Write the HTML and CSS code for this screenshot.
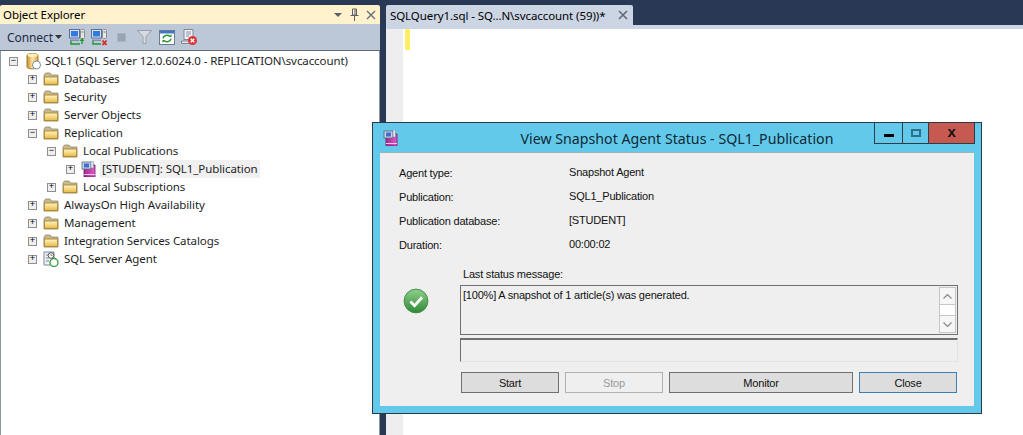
FILE: index.html
```html
<!DOCTYPE html>
<html lang="en">
<head>
<meta charset="utf-8">
<title>SSMS Snapshot Agent Status</title>
<link rel="stylesheet" href="styles.css">
</head>
<body>
<svg class="defs" width="0" height="0" aria-hidden="true">
  <defs>
    <linearGradient id="fg" x1="0" y1="0" x2="0" y2="1"><stop offset="0" stop-color="#fff6c8"/><stop offset="1" stop-color="#e9b83f"/></linearGradient>
    <linearGradient id="bk" x1="0" y1="0" x2="1" y2="0"><stop offset="0" stop-color="#a8288f"/><stop offset="1" stop-color="#e25ac8"/></linearGradient>
    <linearGradient id="gb" x1="0" y1="0" x2="0" y2="1"><stop offset="0" stop-color="#8fd08f"/><stop offset="1" stop-color="#2f8a35"/></linearGradient>
    <linearGradient id="cyl" x1="0" y1="0" x2="1" y2="0"><stop offset="0" stop-color="#c98f2c"/><stop offset=".5" stop-color="#fbe6a6"/><stop offset="1" stop-color="#d9a648"/></linearGradient>
    <symbol id="folder" viewBox="0 0 16 14">
      <path d="M1 3 2.500 1H7l1.500 2H15v10H1z" fill="#c9b98a" stroke="#8f8a70" stroke-width=".8"/>
      <path d="M1.400 5H14.600V12.600H1.400z" fill="url(#fg)" stroke="#a8842f" stroke-width=".9"/>
    </symbol>
    <symbol id="pub" viewBox="0 0 16 16">
      <path d="M3 4h11v12H3z" fill="url(#bk)" stroke="#6b1a60" stroke-width=".8"/>
      <path d="M3 13.500h11" stroke="#f5c6ea" stroke-width="1"/>
      <rect x="1" y="1" width="9" height="7" fill="#c9d3e6" stroke="#56657f" stroke-width=".8"/>
      <rect x="3" y="2.500" width="5" height="4" fill="#3e6fd0"/>
      <rect x="10" y="0" width="2.500" height="7" fill="#dfe4ec" stroke="#7a8598" stroke-width=".5"/>
    </symbol>
    <symbol id="pc" viewBox="0 0 17 17">
      <rect x=".5" y=".5" width="10" height="8.500" fill="#d7e2f2" stroke="#5b6f94"/>
      <rect x="2" y="2" width="7" height="5.500" fill="#2f7be0"/>
      <rect x="11.500" y=".5" width="4" height="9" rx="1" fill="#e6e6e6" stroke="#8c8c8c"/>
      <path d="M12.500 3h2" stroke="#777"/>
      <path d="M1 10.500h9v1.500H1z" fill="#7d8fb0"/>
    </symbol>
  </defs>
</svg>

<aside class="explorer">
  <header class="pane-title">
    <span class="pane-name">Object Explorer</span>
    <span class="pane-controls">
      <svg width="10" height="6" viewBox="0 0 10 6"><path d="M1 1h8L5 5z" fill="#5b5f66"/></svg>
      <svg width="9" height="13" viewBox="0 0 9 13"><path d="M2.500 1h4v6h-4zM.5 7.500h8M4.500 8v5M5 1.500v5" fill="none" stroke="#5b5f66"/></svg>
      <svg width="10" height="10" viewBox="0 0 10 10"><path d="M1 1l8 8M9 1l-8 8" stroke="#6b6f76" stroke-width="1.400"/></svg>
    </span>
  </header>
  <div class="toolbar">
    <span class="connect">Connect</span>
    <svg class="caret" width="7" height="4" viewBox="0 0 7 4"><path d="M0 0h7L3.500 4z" fill="#333"/></svg>
    <svg class="tb tb-first" width="17" height="17" viewBox="0 0 17 17"><use href="#pc" width="17" height="17"/><path d="M2 12v3h9M13 15v-4" fill="none" stroke="#1d9b2c" stroke-width="1.400"/><path d="M10.500 12l2.500-3 2.500 3z" fill="#1d9b2c"/></svg>
    <svg class="tb tb-second" width="17" height="17" viewBox="0 0 17 17"><use href="#pc" width="17" height="17"/><path d="M2 12v3h8" fill="none" stroke="#1d9b2c" stroke-width="1.400"/><path d="M11.500 11.500l4 4.500M15.500 11.500l-4 4.500" stroke="#e0231c" stroke-width="1.800"/></svg>
    <span class="stop-icon"></span>
    <svg class="tb tb-filter" width="15" height="14" viewBox="0 0 15 14"><path d="M.5.500h14L9 6.500v7H6v-7z" fill="#d8dbe0" stroke="#9aa0a8"/></svg>
    <svg class="tb tb-refresh" width="16" height="15" viewBox="0 0 16 15"><rect x=".5" y=".5" width="15" height="14" fill="#fff" stroke="#6a7a92"/><rect x="1" y="1" width="14" height="2.500" fill="#3f78c8"/><path d="M4 8.500a4 3.500 0 0 1 7-2M12 8.500a4 3.500 0 0 1-7 2" fill="none" stroke="#2b9a33" stroke-width="1.500"/><path d="M9.500 7h3V4zM6.500 10h-3v3z" fill="#2b9a33"/></svg>
    <svg class="tb tb-report" width="16" height="16" viewBox="0 0 16 16"><path d="M3 .5h9v10H3z" fill="#f2f3f6" stroke="#7f8794"/><path d="M5 3h5M5 5h5M5 7h3" stroke="#8a92a0"/><path d="M.5 12h9v2.500H.5z" fill="#e3e6ea" stroke="#7f8794"/><circle cx="11.500" cy="11.500" r="4.500" fill="#d9353a"/><path d="M9.700 9.700l3.600 3.600M13.300 9.700l-3.600 3.600" stroke="#fff" stroke-width="1.300"/></svg>
  </div>
  <ul class="tree">
    <li class="node node-root"><span class="exp">&#8722;</span>
      <svg class="icon" width="15" height="18" viewBox="0 0 15 18"><path d="M1 3.500C1 .8 12 .8 12 3.500V15C12 17.500 1 17.500 1 15z" fill="url(#cyl)" stroke="#a67a26"/><ellipse cx="6.500" cy="3.300" rx="5" ry="1.800" fill="#fdeec2"/><circle cx="10.500" cy="13" r="4" fill="#fff" stroke="#7d8a9c"/></svg>
      <span class="label">SQL1 (SQL Server 12.0.6024.0 - REPLICATION\svcaccount)</span></li>
    <li class="node l1"><span class="exp">+</span><svg class="icon" width="16" height="14"><use href="#folder"/></svg><span class="label">Databases</span></li>
    <li class="node l1"><span class="exp">+</span><svg class="icon" width="16" height="14"><use href="#folder"/></svg><span class="label">Security</span></li>
    <li class="node l1"><span class="exp">+</span><svg class="icon" width="16" height="14"><use href="#folder"/></svg><span class="label">Server Objects</span></li>
    <li class="node l1"><span class="exp">&#8722;</span><svg class="icon" width="16" height="14"><use href="#folder"/></svg><span class="label">Replication</span></li>
    <li class="node l2"><span class="exp">&#8722;</span><svg class="icon" width="16" height="14"><use href="#folder"/></svg><span class="label">Local Publications</span></li>
    <li class="node l3"><span class="exp">+</span><svg class="icon" width="16" height="16"><use href="#pub"/></svg><span class="label selected">[STUDENT]: SQL1_Publication</span></li>
    <li class="node l2"><span class="exp">+</span><svg class="icon" width="16" height="14"><use href="#folder"/></svg><span class="label">Local Subscriptions</span></li>
    <li class="node l1"><span class="exp">+</span><svg class="icon" width="16" height="14"><use href="#folder"/></svg><span class="label">AlwaysOn High Availability</span></li>
    <li class="node l1"><span class="exp">+</span><svg class="icon" width="16" height="14"><use href="#folder"/></svg><span class="label">Management</span></li>
    <li class="node l1"><span class="exp">+</span><svg class="icon" width="16" height="14"><use href="#folder"/></svg><span class="label">Integration Services Catalogs</span></li>
    <li class="node l1"><span class="exp">+</span>
      <svg class="icon" width="16" height="16" viewBox="0 0 16 16"><path d="M1 1h10v13H1z" fill="#eef1f6" stroke="#7f8794"/><path d="M3 4h3M3 7h3M3 10h3" stroke="#7f8794"/><circle cx="8" cy="4.500" r="2.800" fill="#fff" stroke="#555"/><path d="M8 3v1.500h1.500" fill="none" stroke="#555" stroke-width=".7"/><circle cx="11" cy="11.500" r="4" fill="#fff" stroke="#3a9a3f" stroke-width="1.300"/></svg>
      <span class="label">SQL Server Agent</span></li>
  </ul>
</aside>

<main class="editor-pane">
  <div class="tabs">
    <div class="tab">
      <span>SQLQuery1.sql - SQ...N\svcaccount (59))*</span>
      <svg width="10" height="10" viewBox="0 0 10 10"><path d="M1 1l8 8M9 1l-8 8" stroke="#5f6670" stroke-width="1.500"/></svg>
    </div>
  </div>
  <div class="tab-strip"></div>
  <div class="editor">
    <div class="gutter"></div>
    <div class="changebar"></div>
  </div>
</main>

<section class="dialog">
  <header class="dialog-title">
    <svg class="dialog-icon" width="16" height="16"><use href="#pub"/></svg>
    <h1>View Snapshot Agent Status - SQL1_Publication</h1>
    <div class="win-controls">
      <span class="win-btn min"><i></i></span>
      <span class="win-btn max"><i></i></span>
      <span class="win-btn close">x</span>
    </div>
  </header>
  <div class="dialog-body">
    <dl class="info">
      <dt>Agent type:</dt><dd>Snapshot Agent</dd>
      <dt>Publication:</dt><dd>SQL1_Publication</dd>
      <dt>Publication database:</dt><dd>[STUDENT]</dd>
      <dt>Duration:</dt><dd>00:00:02</dd>
    </dl>
    <div class="status-caption">Last status message:</div>
    <div class="status-row">
      <svg class="ok" width="26" height="26" viewBox="0 0 28 28"><circle cx="14" cy="14" r="12.800" fill="url(#gb)" stroke="#3b8a3e"/><path d="M8 14.500l4.500 4.500L20.500 10" fill="none" stroke="#fff" stroke-width="3"/></svg>
      <div class="status-box">
        <span class="status-text">[100%] A snapshot of 1 article(s) was generated.</span>
        <div class="scroll">
          <span class="sb-btn"><svg width="9" height="5" viewBox="0 0 9 5"><path d="M.5 4.500l4-4 4 4" fill="none" stroke="#8a8a8a" stroke-width="1.200"/></svg></span>
          <span class="sb-track"></span>
          <span class="sb-btn"><svg width="9" height="5" viewBox="0 0 9 5"><path d="M.5.500l4 4 4-4" fill="none" stroke="#8a8a8a" stroke-width="1.200"/></svg></span>
        </div>
      </div>
    </div>
    <div class="progress"></div>
    <div class="actions">
      <button class="btn">Start</button>
      <button class="btn disabled">Stop</button>
      <button class="btn wide">Monitor</button>
      <button class="btn default">Close</button>
    </div>
  </div>
</section>
</body>
</html>
```

FILE: styles.css
```css
* { box-sizing: border-box; }
html, body { margin: 0; padding: 0; height: 100%; }
body {
  width: 1023px;
  height: 435px;
  overflow: hidden;
  background: #293955;
  display: flex;
  gap: 6px;
  padding-top: 5px;
  position: relative;
  font-family: "Noto Sans", "Open Sans", sans-serif;
  font-size: 11.5px;
  letter-spacing: -0.085px;
  color: #1e1e1e;
}
.defs { position: absolute; }

/* Object Explorer */
.explorer { width: 380px; display: flex; flex-direction: column; flex: none; }
.pane-title {
  height: 19px;
  background: #fff2cc;
  border-radius: 2px 2px 0 0;
  display: flex;
  align-items: center;
  justify-content: space-between;
  padding: 0 4px 0 3px;
  color: #000;
}
.pane-controls { display: flex; align-items: center; gap: 7px; }
.toolbar {
  height: 27px;
  background: #bcc7d8;
  border-bottom: 1px solid #5f6b7d;
  display: flex;
  align-items: center;
  padding-left: 7px;
}
.connect { width: 48px; color: #1e2a44; font-size: 12px; }
.tb { flex: none; }
.tb-first { margin-left: 7px; }
.tb-second { margin-left: 5px; }
.stop-icon { width: 9px; height: 9px; margin: 0 11px 0 9px; background: #9aa3b0; box-shadow: inset 0 0 0 1px #aab2bd; }
.tb-refresh { margin-left: 7px; }
.tb-report { margin-left: 6px; }
.tree {
  list-style: none;
  margin: 0;
  padding: 1px 0 0;
  flex: 1;
  background: #fff;
  border-left: 1px solid #8d96a3;
  border-right: 1px solid #8d96a3;
}
.node { height: 18px; display: flex; align-items: center; padding-left: 8px; white-space: nowrap; }
.l1 { padding-left: 27px; }
.l2 { padding-left: 46px; }
.l3 { padding-left: 65px; }
.exp {
  width: 9px;
  height: 9px;
  flex: none;
  border: 1px solid #8f8f8f;
  background: #eee;
  font: 9px/7px "Liberation Mono", monospace;
  letter-spacing: 0;
  text-align: center;
  color: #000;
}
.icon { flex: none; margin-left: 6px; }
.node-root .icon { margin-left: 8px; }
.label { margin-left: 4px; height: 18px; line-height: 18px; padding: 0 1px; }
.node-root .label { margin-left: 3px; }
.selected { background: #f0f0f0; padding: 0 2px; margin-left: 3px; }

/* Editor */
.editor-pane { flex: 1; display: flex; flex-direction: column; }
.tabs { height: 20px; display: flex; }
.tab {
  width: 247px;
  background: #ccd5e3;
  border-radius: 2px 2px 0 0;
  display: flex;
  align-items: center;
  justify-content: space-between;
  padding: 0 5px 0 4px;
  color: #000;
  white-space: nowrap;
}
.tab-strip { height: 4px; background: #ccd5e3; }
.editor { flex: 1; background: #fff; display: flex; }
.gutter { width: 17px; background: #eeeeee; }
.changebar { width: 5px; height: 21px; margin-left: 2px; background: #ffee62; }

/* Dialog window */
.dialog {
  position: absolute;
  left: 372px;
  top: 122px;
  width: 610px;
  height: 292px;
  background: #63c9ea;
  border: 1px solid #2c3a48;
  display: flex;
  flex-direction: column;
  padding: 0 7px 7px;
  font-family: "Liberation Sans", Arial, sans-serif;
  font-size: 11px;
  letter-spacing: -0.2px;
  color: #111;
}
.dialog-title {
  height: 29px;
  flex: none;
  display: grid;
  grid-template-columns: 1fr auto 1fr;
  align-items: start;
  margin: 0 -6px;
}
.dialog-icon { margin: 7px 0 0 9px; }
h1 {
  margin: 7px 0 0;
  font: 400 14.200px/18px "Noto Sans", "Open Sans", sans-serif;
  letter-spacing: 0;
  color: #0d2a36;
}
.win-controls { justify-self: end; display: flex; height: 21px; margin-right: 5px; }
.win-btn {
  height: 21px;
  border: 1px solid #2f3b47;
  border-top: 0;
  display: flex;
  align-items: center;
  justify-content: center;
  margin-left: -1px;
}
.min { width: 29px; }
.min i { width: 10px; height: 3px; background: #000; margin-top: 4px; }
.max { width: 27px; }
.max i { width: 10px; height: 8px; border: 2px solid #2f6f8c; }
.close { width: 47px; background: #c75a50; font: 700 15px/1 "Liberation Sans", sans-serif; color: #111; padding-bottom: 3px; }
.dialog-body {
  flex: 1;
  background: #efefef;
  border-top: 1px solid #9fb3bf;
  padding: 9px 15px 0 19px;
  display: flex;
  flex-direction: column;
}
.info {
  margin: 0;
  display: grid;
  grid-template-columns: 170px 1fr;
  grid-auto-rows: 24px;
}
dt { padding-top: 5px; }
dd { margin: 0; padding-top: 4px; }
.status-caption { margin: 10px 0 0 64px; height: 13px; line-height: 13px; }
.status-row { display: flex; align-items: flex-start; margin-top: 4px; }
.ok { margin: 3px 31px 0 4px; flex: none; }
.status-box {
  width: 498px;
  height: 50px;
  border: 1px solid #707070;
  background: #efefef;
  padding: 0 1px 0 2px;
  display: flex;
  justify-content: space-between;
  flex: none;
}
.status-text { padding-top: 3px; }
.scroll { width: 17px; margin: 1px 0; border: 1px solid #c6c6c6; background: #f6f6f6; display: flex; flex-direction: column; }
.sb-btn { height: 16px; flex: none; display: flex; align-items: center; justify-content: center; }
.sb-track { flex: 1; border-top: 1px solid #c6c6c6; border-bottom: 1px solid #c6c6c6; background: #fff; }
.progress {
  width: 498px;
  height: 24px;
  margin: 3px 0 0 61px;
  border-top: 2px solid #6e6e6e;
  border-left: 1px solid #6e6e6e;
  border-right: 1px solid #e3e3e3;
  border-bottom: 1px solid #e3e3e3;
  flex: none;
}
.actions { display: flex; gap: 6px; margin: 10px 0 0 62px; }
.btn {
  width: 98px;
  height: 21px;
  padding: 0;
  background: #dddddd;
  border: 1px solid #707070;
  font: 11px "Liberation Sans", Arial, sans-serif;
  letter-spacing: -0.2px;
  color: #111;
}
.wide { width: 184px; }
.disabled { background: #efefef; border-color: #adb2b5; color: #9a9a9a; }
.default { border-color: #3c7fb1; }
```
